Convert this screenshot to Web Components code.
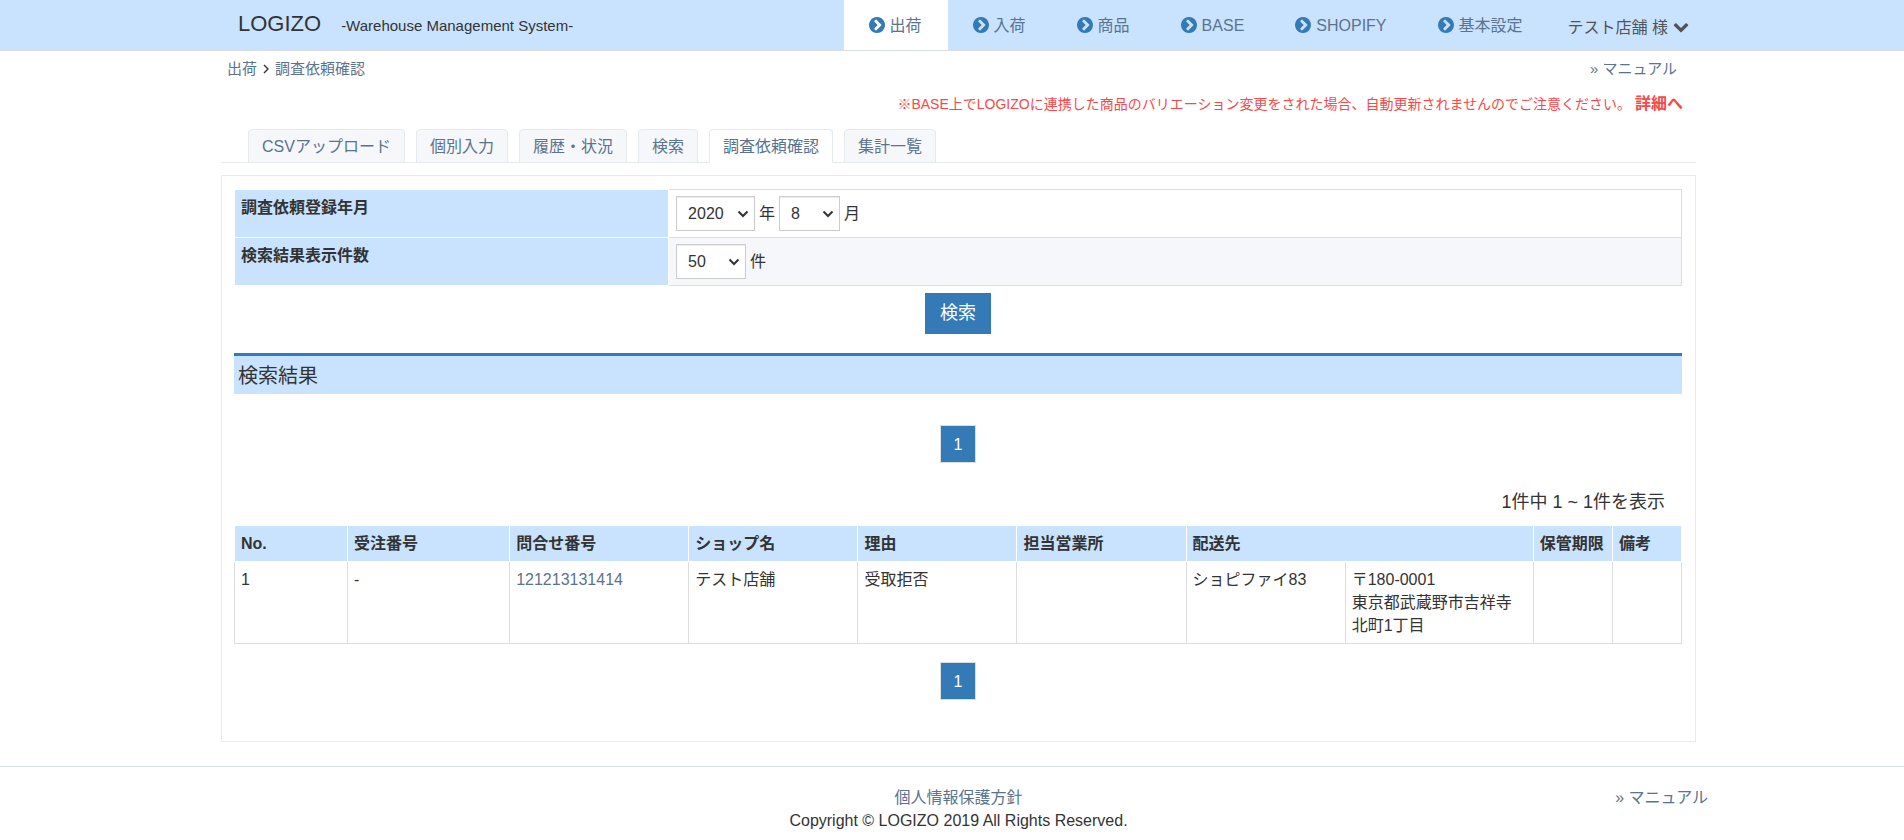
<!DOCTYPE html>
<html lang="ja">
<head>
<meta charset="utf-8">
<meta name="viewport" content="width=device-width, initial-scale=1">
<title>LOGIZO - 調査依頼確認</title>
<style>
  body {
    margin: 0;
    background: #fff;
    color: #333;
    font: 16px/23px "Liberation Sans", "Noto Sans CJK JP", sans-serif;
    --line: #e6e9ed;
    --link: #5a738e;
    --sky: #c9e3ff;
    --blue: #337ab7;
  }
</style>
</head>
<body>
<app-page>
  <app-header slot="header">
    <nav-item active>出荷</nav-item>
    <nav-item>入荷</nav-item>
    <nav-item>商品</nav-item>
    <nav-item>BASE</nav-item>
    <nav-item>SHOPIFY</nav-item>
    <nav-item>基本設定</nav-item>
    <user-menu slot="user">テスト店舗 様</user-menu>
  </app-header>
  <page-intro></page-intro>
  <tab-bar>
    <tab-item>CSVアップロード</tab-item>
    <tab-item>個別入力</tab-item>
    <tab-item>履歴・状況</tab-item>
    <tab-item>検索</tab-item>
    <tab-item active>調査依頼確認</tab-item>
    <tab-item>集計一覧</tab-item>
  </tab-bar>
  <content-panel>
    <search-form></search-form>
    <section-title>検索結果</section-title>
    <page-list></page-list>
    <result-count>1件中 1 ~ 1件を表示</result-count>
    <result-table></result-table>
    <page-list></page-list>
  </content-panel>
  <app-footer slot="footer"></app-footer>
</app-page>

<script>
  const define = (name, html) => {
    const template = document.createElement('template');
    template.innerHTML = html;
    customElements.define(name, class extends HTMLElement {
      constructor() {
        super();
        this.attachShadow({ mode: 'open' }).append(template.content.cloneNode(true));
      }
    });
  };

  /* Shared horizontal frame for header, body and footer */
  const frame = `.frame { box-sizing: border-box; max-width: 1488px; margin: 0 auto; padding-left: 13px; }
    a { color: var(--link); text-decoration: none; }`;

  define('app-page', `
    <style>:host { display: block; } ${frame}</style>
    <slot name="header"></slot>
    <main class="frame"><slot></slot></main>
    <slot name="footer"></slot>`);

  define('app-header', `
    <style>
      :host { display: block; background: var(--sky); border-bottom: 1px solid #d9dee4; }
      ${frame}
      .frame { display: flex; min-height: 50px; }
      .brand { display: flex; align-items: baseline; gap: 20px; padding: 12px 0 0 17px; }
      .brand a { font-size: 22px; color: #333; }
      .brand span { font-size: 15px; }
      nav { display: flex; margin-left: auto; }
    </style>
    <header class="frame">
      <div class="brand"><a href="#">LOGIZO</a><span>-Warehouse Management System-</span></div>
      <nav><slot></slot></nav>
      <slot name="user"></slot>
    </header>`);

  define('nav-item', `
    <style>
      :host { display: flex; }
      :host([active]) { background: #fff; }
      a { display: flex; align-items: center; gap: 5px; padding: 0 26px 0 25px; color: var(--link); text-decoration: none; }
      svg { width: 16px; height: 16px; fill: var(--blue); }
    </style>
    <a href="#"><svg viewBox="128 128 1536 1536" aria-hidden="true"><path d="M845 1395l454-454q19-19 19-45t-19-45l-454-454q-19-19-45-19t-45 19l-102 102q-19 19-19 45t19 45l307 307-307 307q-19 19-19 45t19 45l102 102q19 19 45 19t45-19zm819-499q0 209-103 385.5t-279.5 279.5-385.5 103-385.5-103-279.5-279.5-103-385.5 103-385.5 279.5-279.5 385.5-103 385.5 103 279.5 279.5 103 385.5z"/></svg><span><slot></slot></span></a>`);

  define('user-menu', `
    <style>
      :host { display: flex; align-items: center; padding: 4px 7px 0 19px; }
      a { display: flex; align-items: center; gap: 5px; color: #515356; text-decoration: none; }
      svg { width: 16px; height: 16px; fill: #515356; }
    </style>
    <a href="#"><span><slot></slot></span><svg viewBox="0 64 1792 1792" aria-hidden="true"><path d="M1683 808l-742 741q-19 19-45 19t-45-19l-742-741q-19-19-19-45.500t19-45.500l166-165q19-19 45-19t45 19l531 531 531-531q19-19 45-19t45 19l166 165q19 19 19 45.500t-19 45.500z"/></svg></a>`);

  define('page-intro', `
    <style>
      :host { display: block; }
      a { color: var(--link); text-decoration: none; }
      .top { display: flex; justify-content: space-between; padding: 6px 19px 0 6px; font-size: 15px; }
      .crumbs { display: flex; align-items: center; gap: 6px; }
      .crumbs svg { width: 6px; height: 10px; fill: none; stroke: #333; stroke-width: 1.4; }
      .notice { margin: 12px 13px 13px 0; text-align: right; font-size: 14px; color: #f94848; }
      .notice a { margin-left: 4px; font-size: 16px; font-weight: bold; color: inherit; }
    </style>
    <div class="top">
      <nav class="crumbs"><a href="#">出荷</a><svg viewBox="0 0 6 10" aria-hidden="true"><path d="M1 1l4 4-4 4"/></svg><a href="#">調査依頼確認</a></nav>
      <a href="#">» マニュアル</a>
    </div>
    <p class="notice">※BASE上でLOGIZOに連携した商品のバリエーション変更をされた場合、自動更新されませんのでご注意ください。<a href="#">詳細へ</a></p>`);

  define('tab-bar', `
    <style>
      :host { display: block; border-bottom: 1px solid var(--line); }
      nav { display: flex; gap: 11px; padding-left: 27px; margin-bottom: -1px; }
    </style>
    <nav><slot></slot></nav>`);

  define('tab-item', `
    <style>
      :host { display: block; border: 1px solid var(--line); border-radius: 4px 4px 0 0; background: #f5f7fa; }
      :host([active]) { background: #fff; border-bottom-color: #fff; }
      a { display: block; padding: 5px 13px 4px; color: var(--link); text-decoration: none; }
    </style>
    <a href="#"><slot></slot></a>`);

  define('content-panel', `
    <style>:host { display: block; margin-top: 12px; padding: 13px 13px 41px 12px; border: 1px solid var(--line); }</style>
    <slot></slot>`);

  define('search-form', `
    <style>
      :host { display: block; }
      table { width: 100%; border-collapse: collapse; table-layout: fixed; }
      th { width: 30%; box-sizing: border-box; padding: 6px; text-align: left; vertical-align: top; background: var(--sky); border: 1px solid #fff; }
      td { padding: 6px 7px; border: 1px solid #ddd; }
      tr:nth-child(2) td { background: #f5f7fa; }
      .fields { display: flex; align-items: center; gap: 4px; }
      select {
        box-sizing: border-box; height: 35px; padding: 0 20px 0 11px; appearance: none;
        border: 1px solid #ccc; border-radius: 0; box-shadow: inset 0 1px 1px rgba(0, 0, 0, .08);
        background: #fff url("data:image/svg+xml,%3Csvg xmlns='http://www.w3.org/2000/svg' viewBox='0 0 12 8'%3E%3Cpath d='M1.500 1.500L6 6l4.500-4.500' fill='none' stroke='%23333' stroke-width='2'/%3E%3C/svg%3E") no-repeat right 5px center / 12px 8px;
        color: #333; font: inherit;
      }
      #year { width: 79px; }
      #month { width: 61px; }
      #rows { width: 70px; }
      button { display: block; margin: 7px auto 0; padding: 9px 15px; border: 0; background: var(--blue); color: #fff; font: inherit; font-size: 18px; }
    </style>
    <form>
      <table>
        <tr>
          <th scope="row"><label for="year">調査依頼登録年月</label></th>
          <td><div class="fields"><select id="year"><option>2020</option></select><label for="year">年</label><select id="month"><option>8</option></select><label for="month">月</label></div></td>
        </tr>
        <tr>
          <th scope="row"><label for="rows">検索結果表示件数</label></th>
          <td><div class="fields"><select id="rows"><option>50</option></select><label for="rows">件</label></div></td>
        </tr>
      </table>
      <button type="button">検索</button>
    </form>`);

  define('section-title', `
    <style>
      :host { display: block; margin: 19px 0 31px; }
      h2 { margin: 0; padding: 9px 4px 6px; border-top: 3px solid var(--blue); background: var(--sky); font-size: 20px; font-weight: normal; }
    </style>
    <h2><slot></slot></h2>`);

  define('page-list', `
    <style>
      :host { display: flex; justify-content: center; }
      a { box-sizing: border-box; width: 36px; padding: 7px 0 6px; border: 1px solid #ddd; background: var(--blue); color: #fff; text-align: center; text-decoration: none; }
    </style>
    <a href="#" aria-current="page">1</a>`);

  define('result-count', `
    <style>:host { display: block; margin: 28px 17px 11px; text-align: right; font-size: 18px; }</style>
    <slot></slot>`);

  define('result-table', `
    <style>
      :host { display: block; margin-bottom: 18px; }
      table { width: 100%; border-collapse: collapse; table-layout: fixed; }
      th, td { padding: 6px; text-align: left; vertical-align: top; }
      th { background: var(--sky); border: 1px solid #fff; white-space: nowrap; }
      td { border: 1px solid #ddd; }
      a { color: var(--link); text-decoration: none; }
    </style>
    <table>
      <colgroup>
        <col style="width:113px"><col style="width:162px"><col style="width:179px"><col style="width:169px"><col style="width:159px">
        <col style="width:169px"><col style="width:159px"><col style="width:188px"><col style="width:79px"><col style="width:69px">
      </colgroup>
      <thead>
        <tr><th>No.</th><th>受注番号</th><th>問合せ番号</th><th>ショップ名</th><th>理由</th><th>担当営業所</th><th colspan="2">配送先</th><th>保管期限</th><th>備考</th></tr>
      </thead>
      <tbody>
        <tr><td>1</td><td>-</td><td><a href="#">121213131414</a></td><td>テスト店舗</td><td>受取拒否</td><td></td><td>ショピファイ83</td><td>〒180-0001<br>東京都武蔵野市吉祥寺北町1丁目</td><td></td><td></td></tr>
      </tbody>
    </table>`);

  define('app-footer', `
    <style>
      :host { display: block; margin-top: 24px; border-top: 1px solid #d9dee4; }
      ${frame}
      .row { display: grid; grid-template-columns: 1fr auto 1fr; padding: 19px 0 8px; }
      .center { grid-column: 2; text-align: center; }
      .manual { justify-self: end; margin-right: -12px; }
      p { margin: 0; }
    </style>
    <footer class="frame"><div class="row">
      <div class="center"><a href="#">個人情報保護方針</a><p>Copyright © LOGIZO 2019 All Rights Reserved.</p></div>
      <a class="manual" href="#">» マニュアル</a>
    </div></footer>`);
</script>
</body>
</html>
